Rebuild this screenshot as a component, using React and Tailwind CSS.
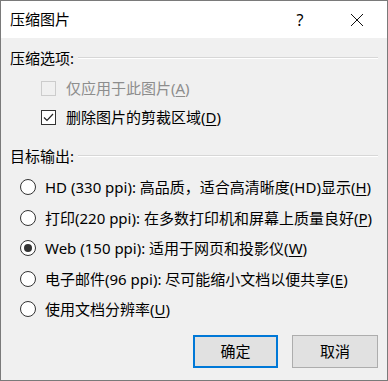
import { useState } from 'react';

const FONT = { fontFamily: '"Noto Sans", "Noto Sans CJK SC", sans-serif' };

function Key({ children }) {
    return <span className="underline underline-offset-2">{children}</span>;
}

function Heading({ children }) {
    return (
        <div className="flex items-center h-[22px] gap-1">
            <span>{children}</span>
            <div className="flex-1 h-[2px] border-t border-[#d7d7d7] border-b border-b-white" />
        </div>
    );
}

function Check({ checked, disabled, label }) {
    return (
        <div className="flex items-center h-[29px] pl-[31px] gap-[10px]">
            <span
                className={`w-[15px] h-[15px] border flex items-center justify-center ${
                    disabled ? 'border-[#cccccc] bg-[#f0f0f0]' : 'border-[#333333] bg-white'
                }`}
            >
                {checked && (
                    <svg width="11" height="9" viewBox="0 0 11 9" fill="none">
                        <path d="M1 4.5 L4 7.5 L10 1" stroke="#222" strokeWidth="1.2" />
                    </svg>
                )}
            </span>
            <span className={disabled ? 'text-[#8d8d8d]' : 'text-black'}>{label}</span>
        </div>
    );
}

function Radio({ selected, onSelect, label }) {
    return (
        <div className="flex items-center h-[30.5px] pl-[10px] gap-[9px] cursor-default" onClick={onSelect}>
            <span className="w-[16px] h-[16px] rounded-full border border-[#333333] bg-white flex items-center justify-center">
                {selected && <span className="w-[8px] h-[8px] rounded-full bg-[#333333]" />}
            </span>
            <span className="whitespace-nowrap">{label}</span>
        </div>
    );
}

export default function App() {
    const [target, setTarget] = useState('web');

    return (
        <div
            className="w-[388px] h-[381px] border border-[#7a7a7a] bg-[#f0f0f0] flex flex-col text-[15px] text-black overflow-hidden"
            style={FONT}
        >
            {/* title bar */}
            <div className="h-[37px] bg-white flex items-center pl-[9px] shrink-0">
                <span>压缩图片</span>
                <span className="ml-auto w-[20px] text-center text-[16px]">?</span>
                <span className="ml-[32px] mr-[15px] w-[30px] flex items-center justify-center">
                    <svg width="14" height="14" viewBox="0 0 14 14">
                        <path d="M1 1 L13 13 M13 1 L1 13" stroke="#111" strokeWidth="1" />
                    </svg>
                </span>
            </div>

            <div className="flex-1 px-[9px] pt-[9px] pb-[12px] flex flex-col">
                <Heading>压缩选项:</Heading>
                <div className="pt-[5px]">
                    <Check disabled label={<>仅应用于此图片(<Key>A</Key>)</>} />
                    <Check checked label={<>删除图片的剪裁区域(<Key>D</Key>)</>} />
                </div>

                <div className="pt-[13px]">
                    <Heading>目标输出:</Heading>
                </div>
                <div className="pt-[5px]">
                    <Radio
                        selected={target === 'hd'}
                        onSelect={() => setTarget('hd')}
                        label={<>HD (330 ppi): 高品质，适合高清晰度(HD)显示(<Key>H</Key>)</>}
                    />
                    <Radio
                        selected={target === 'print'}
                        onSelect={() => setTarget('print')}
                        label={<>打印(220 ppi): 在多数打印机和屏幕上质量良好(<Key>P</Key>)</>}
                    />
                    <Radio
                        selected={target === 'web'}
                        onSelect={() => setTarget('web')}
                        label={<>Web (150 ppi): 适用于网页和投影仪(<Key>W</Key>)</>}
                    />
                    <Radio
                        selected={target === 'email'}
                        onSelect={() => setTarget('email')}
                        label={<>电子邮件(96 ppi): 尽可能缩小文档以便共享(<Key>E</Key>)</>}
                    />
                    <Radio
                        selected={target === 'doc'}
                        onSelect={() => setTarget('doc')}
                        label={<>使用文档分辨率(<Key>U</Key>)</>}
                    />
                </div>

                <div className="mt-auto flex justify-end gap-[14px]">
                    <button className="w-[85px] h-[33px] border-2 border-[#0078d7] bg-[#e1e1e1]">确定</button>
                    <button className="w-[86px] h-[33px] border border-[#adadad] bg-[#e1e1e1]">取消</button>
                </div>
            </div>
        </div>
    );
}
